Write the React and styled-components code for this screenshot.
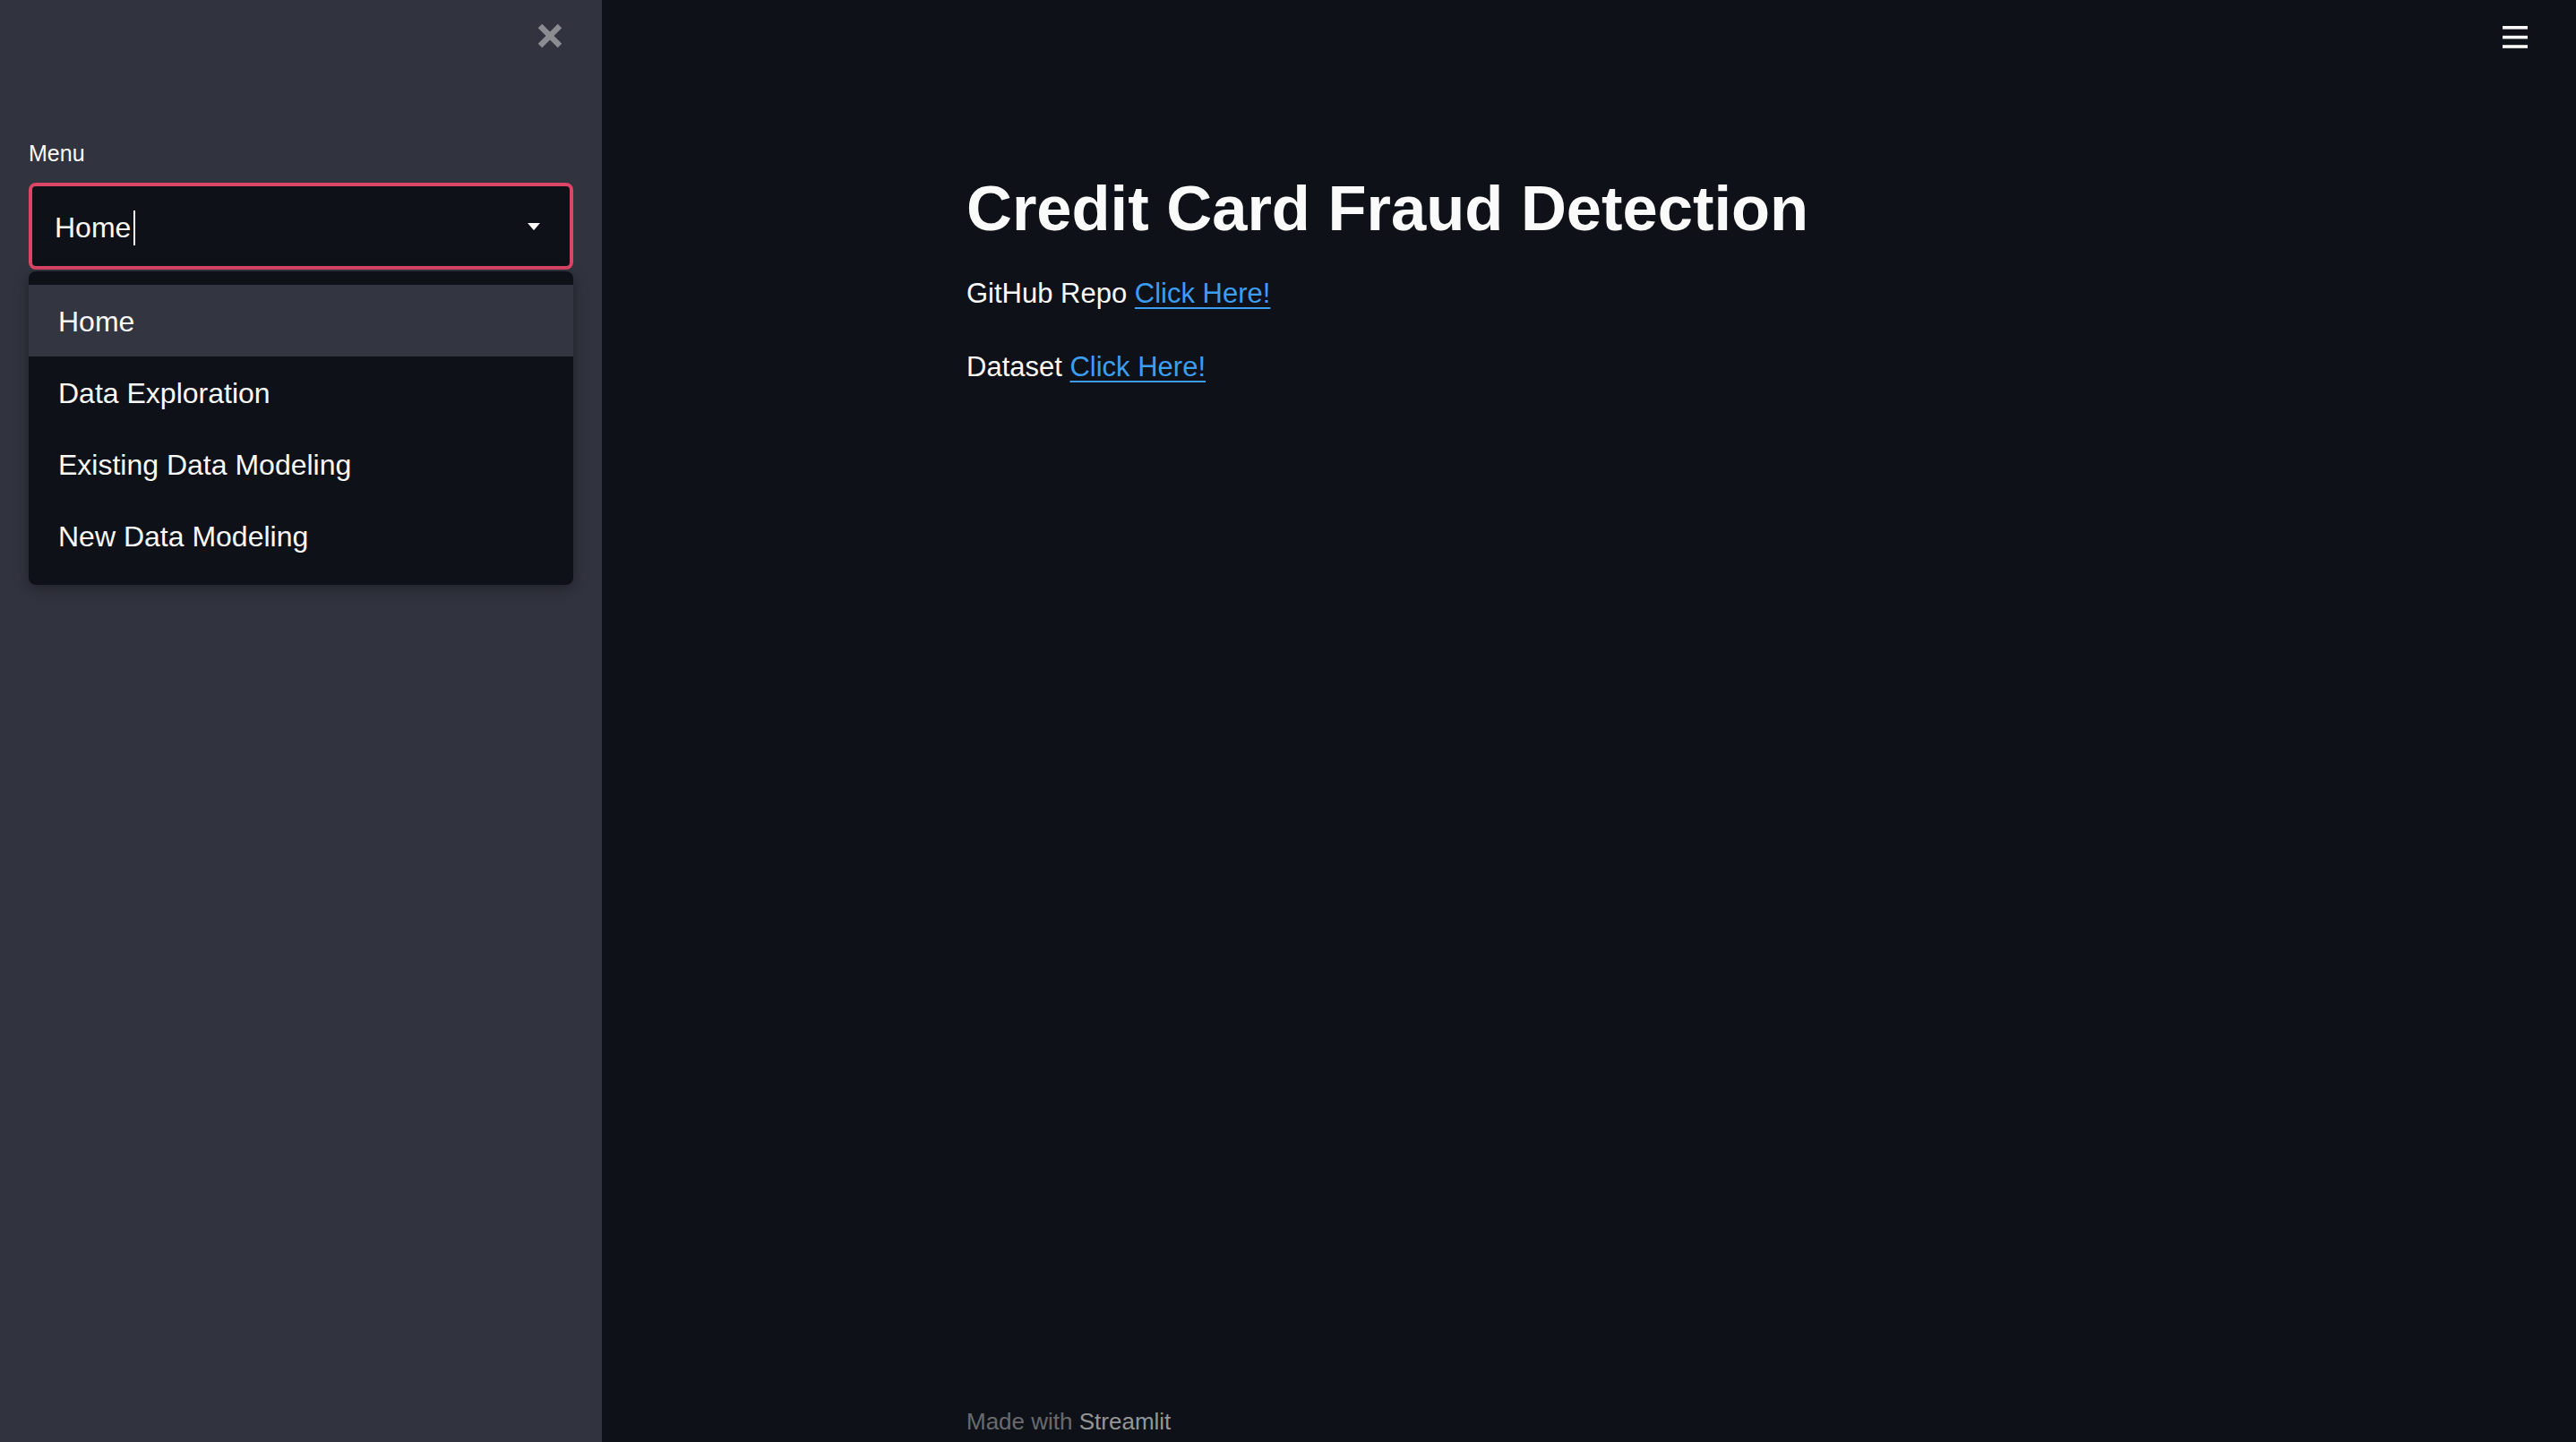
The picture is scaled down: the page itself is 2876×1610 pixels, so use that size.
import styled, { createGlobalStyle } from "styled-components";

const menuItems = ["Home", "Data Exploration", "Existing Data Modeling", "New Data Modeling"];

const App = () => {
  return (
    <>
      <GlobalStyle />
      <Layout>
        <Sidebar>
          <CloseRow>
            <CloseButton aria-label="Close sidebar">
              <svg width="28" height="28" viewBox="0 0 28 28">
                <path d="M3 3 L25 25 M25 3 L3 25" stroke="currentColor" strokeWidth="6.4" />
              </svg>
            </CloseButton>
          </CloseRow>

          <Label>Menu</Label>
          <SelectWrap>
            <SelectBox>
              <SelectValue>
                Home
                <Cursor />
              </SelectValue>
              <svg width="14" height="8" viewBox="0 0 14 8">
                <path d="M0 0 H14 L7.6 7.4 Q7 8 6.4 7.4 Z" fill="#fafafa" />
              </svg>
            </SelectBox>

            <Dropdown>
              {menuItems.map((item, i) => (
                <Option key={item} active={i === 0}>
                  {item}
                </Option>
              ))}
            </Dropdown>
          </SelectWrap>
        </Sidebar>

        <Main>
          <Toolbar>
            <svg width="28" height="25" viewBox="0 0 28 25">
              <rect x="0" y="0" width="28" height="3.6" fill="#fafafa" />
              <rect x="0" y="10.8" width="28" height="3.6" fill="#fafafa" />
              <rect x="0" y="21.2" width="28" height="3.6" fill="#fafafa" />
            </svg>
          </Toolbar>

          <Content>
            <Title>Credit Card Fraud Detection</Title>
            <Paragraph>
              GitHub Repo <Link href="#">Click Here!</Link>
            </Paragraph>
            <Paragraph>
              Dataset <Link href="#">Click Here!</Link>
            </Paragraph>
          </Content>

          <Footer>
            Made with <strong>Streamlit</strong>
          </Footer>
        </Main>
      </Layout>
    </>
  );
};

const GlobalStyle = createGlobalStyle`
  * {
    box-sizing: border-box;
  }

  html, body {
    margin: 0;
    height: 100%;
    background: #0e1117;
    color: #fafafa;
    font-family: "Liberation Sans", Arial, sans-serif;
  }

  #root {
    height: 100%;
  }
`;

const Layout = styled.div`
  display: flex;
  height: 100vh;
  overflow: hidden;
`;

const Sidebar = styled.aside`
  background: #31333f;
  display: flex;
  flex: 0 0 672px;
  flex-direction: column;
  padding: 26px 32px 0 32px;
`;

const CloseRow = styled.div`
  display: flex;
  justify-content: flex-end;
  padding-right: 12px;
`;

const CloseButton = styled.div`
  color: #8b8c92;
  display: flex;
  height: 28px;
  width: 28px;
`;

const Label = styled.div`
  font-size: 25px;
  line-height: 30px;
  margin-top: 102px;
  margin-bottom: 18px;
`;

const SelectWrap = styled.div`
  position: relative;
`;

const SelectBox = styled.div`
  align-items: center;
  background: #0e1117;
  border: 4px solid #dc4566;
  border-radius: 8px;
  display: flex;
  height: 97px;
  justify-content: space-between;
  padding: 0 33px 0 25px;
`;

const SelectValue = styled.div`
  align-items: center;
  display: flex;
  font-size: 32px;
  line-height: 38px;
  padding-top: 3px;
`;

const Cursor = styled.span`
  background: #fafafa;
  display: inline-block;
  height: 39px;
  margin-left: 3px;
  width: 2px;
`;

const Dropdown = styled.div`
  background: #0e1117;
  border-radius: 8px;
  box-shadow: 0 4px 16px rgba(0, 0, 0, 0.35);
  left: 0;
  padding: 15px 0;
  position: absolute;
  right: 0;
  top: calc(100% + 2px);
  z-index: 10;
`;

const Option = styled.div`
  align-items: center;
  background: ${(p) => (p.active ? "#333541" : "transparent")};
  display: flex;
  font-size: 32px;
  height: 80px;
  padding: 2px 0 0 33px;
`;

const Main = styled.main`
  display: flex;
  flex: 1;
  flex-direction: column;
`;

const Toolbar = styled.div`
  display: flex;
  height: 82px;
  justify-content: flex-end;
  padding: 29px 54px 0 0;
`;

const Content = styled.div`
  margin: 0 auto;
  max-width: 1390px;
  padding-top: 109px;
  width: 100%;
`;

const Title = styled.h1`
  font-size: 70.5px;
  font-weight: 700;
  line-height: 84px;
  margin: 0 0 28px;
`;

const Paragraph = styled.p`
  font-size: 31px;
  line-height: 49.6px;
  margin: 0 0 32.4px;
`;

const Link = styled.a`
  color: #3d9df3;
  text-decoration: underline;
  text-decoration-thickness: 2px;
  text-underline-offset: 5px;
`;

const Footer = styled.footer`
  color: rgba(250, 250, 250, 0.4);
  font-size: 26px;
  line-height: 31px;
  margin: auto auto 0;
  max-width: 1390px;
  padding-bottom: 7px;
  width: 100%;

  strong {
    color: rgba(250, 250, 250, 0.58);
    font-weight: 400;
  }
`;

export default App;
